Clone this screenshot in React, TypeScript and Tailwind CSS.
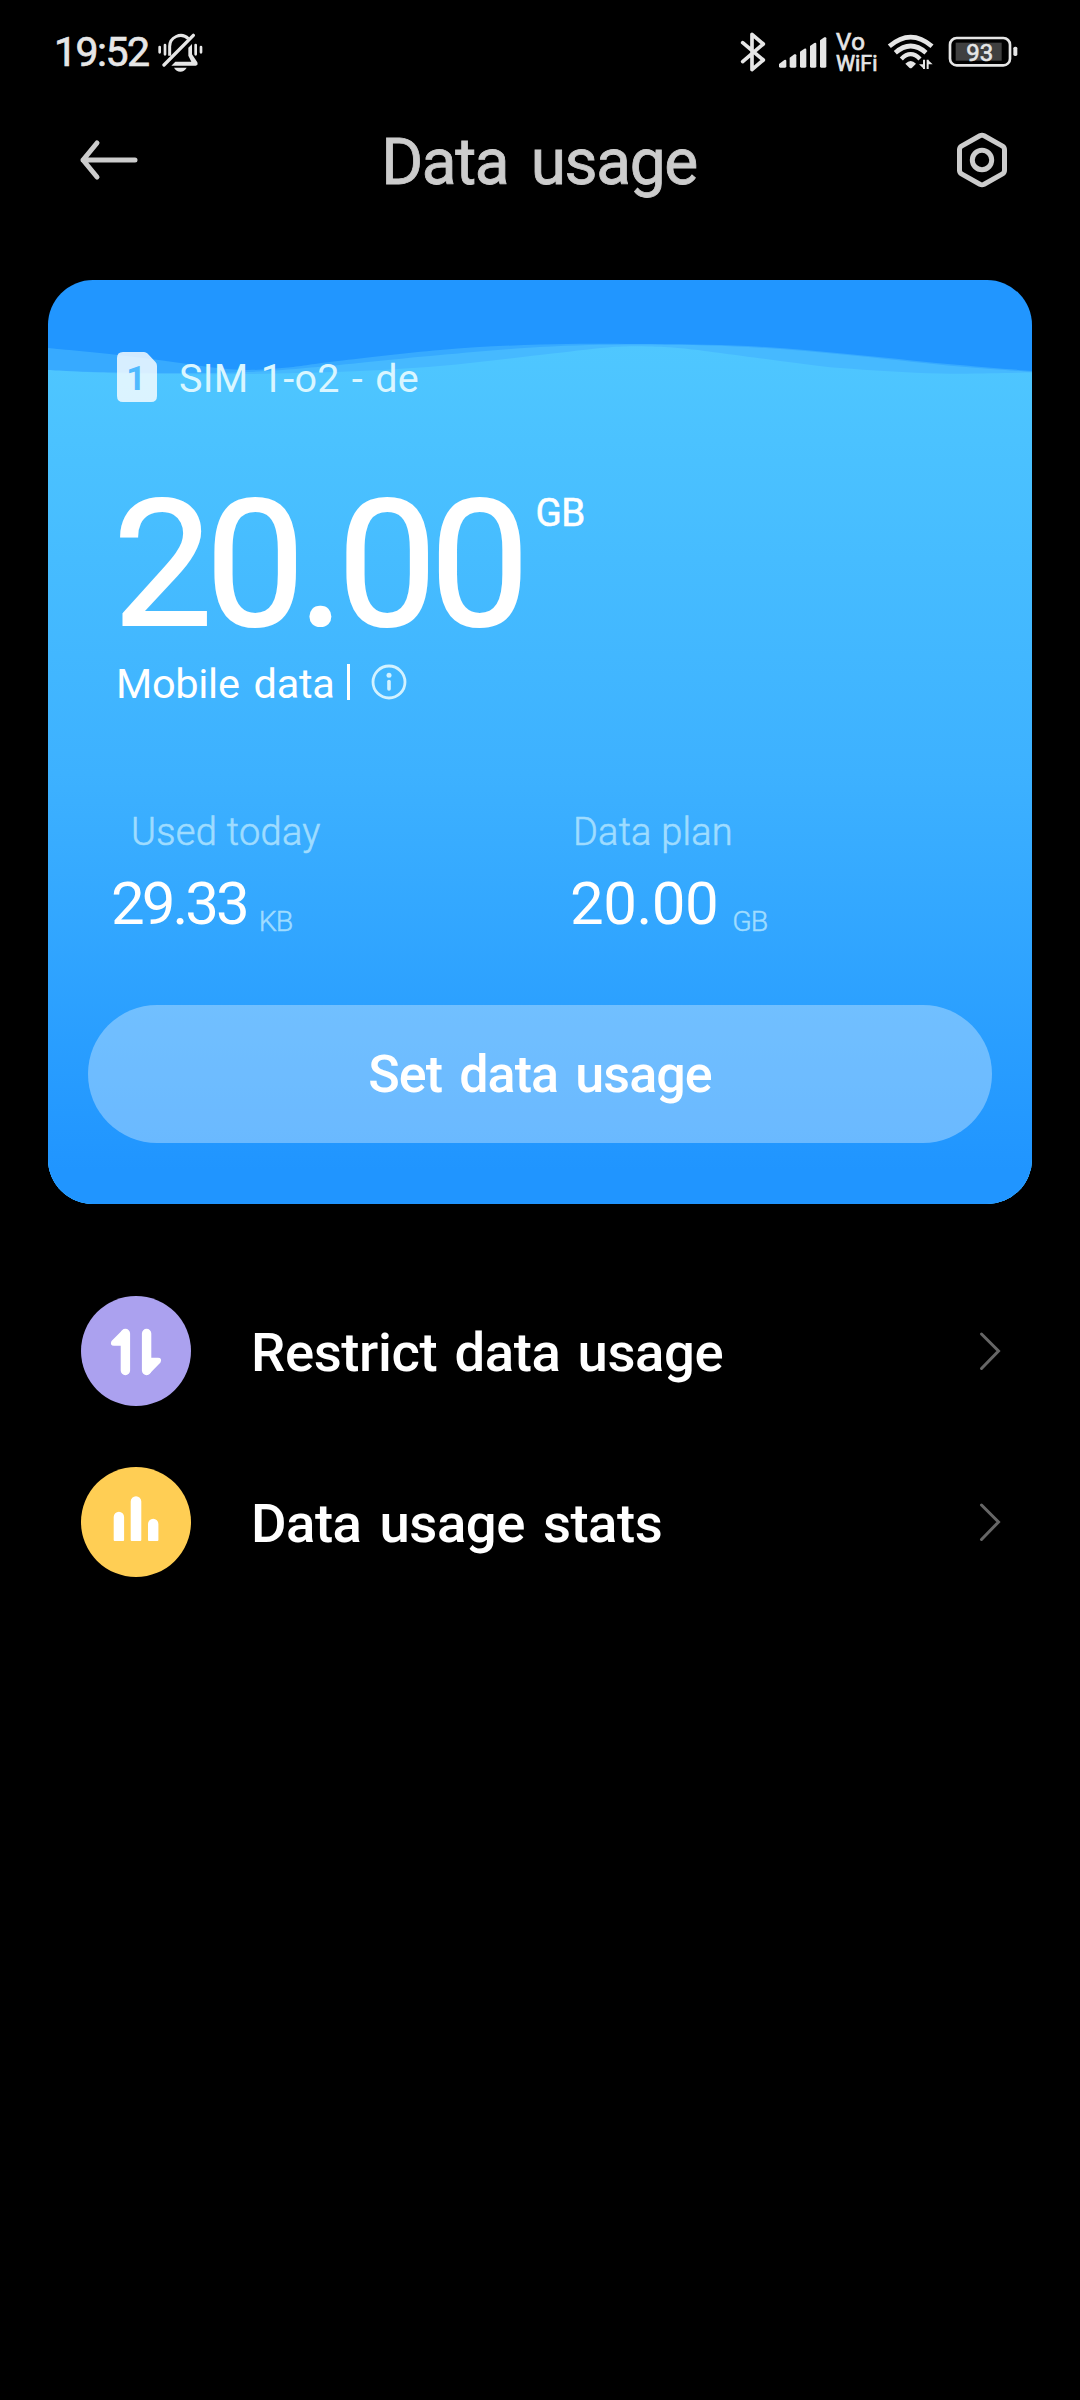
import type { ReactNode } from "react";

type Point = [number, number];

const backWave: Point[] = [
  [0, 68], [70, 75], [125, 82], [165, 87.5], [200, 90], [240, 87.5], [290, 81],
  [392, 70], [492, 64.5], [590, 64], [700, 66], [800, 74], [900, 84], [984, 91],
];

const middleWave: Point[] = [
  [0, 91], [120, 93], [200, 92], [270, 87], [325, 81.5], [392, 75], [492, 67],
  [590, 64.5], [700, 67], [800, 75], [900, 85.5], [984, 92],
];

const frontWave: Point[] = [
  [0, 90], [60, 93], [120, 94], [200, 94], [300, 91.5], [392, 86], [492, 75],
  [560, 67.5], [600, 66.5], [640, 69], [725, 80], [792, 88], [892, 93.5], [984, 92.5],
];

const stats = [
  {
    label: "Used today",
    value: "29.33",
    unit: "KB",
    column: "w-[460px]",
    labelClass: "pl-[18px] tracking-[0.3px]",
    valueClass: "-ml-[2px] tracking-[-3px]",
    unitClass: "ml-[12px] tracking-[-1px]",
  },
  {
    label: "Data plan",
    value: "20.00",
    unit: "GB",
    column: "",
    labelClass: "tracking-[0.2px]",
    valueClass: "-ml-[3px] tracking-[-0.5px]",
    unitClass: "ml-[14px] tracking-[-1px]",
  },
];

const links = [
  {
    title: "Restrict data usage",
    color: "bg-[#aba1ef]",
    textClass: "tracking-[-0.4px] [word-spacing:4px]",
    icon: (
      <>
        <path d="M44.4 37.5V74.5M65.6 37.5V74.5" stroke="white" strokeWidth="9.4" strokeLinecap="round" />
        <path d="M41 34.5L30.5 45Q28.5 49.5 33 49.8H44V36zM69 77.3L79.5 66.5Q81.5 62 77 61.8H66V75z" fill="white" />
      </>
    ),
  },
  {
    title: "Data usage stats",
    color: "bg-[#ffce54]",
    textClass: "tracking-[-0.5px] [word-spacing:5px]",
    icon: (
      <path
        d="M32.7 73V50a5.2 5.2 0 0 1 10.4 0V73q0 1-1 1H33.7q-1 0-1-1zM49.7 73V34.5a5.3 5.3 0 0 1 10.6 0V73q0 1-1 1H50.7q-1 0-1-1zM67 73V57a5.2 5.2 0 0 1 10.4 0V73q0 1-1 1H68q-1 0-1-1z"
        fill="white"
      />
    ),
  },
];

// Smooth curve through the crest points, closed along the bottom of the card.
function wavePath(points: Point[]) {
  let d = `M${points[0][0]} ${points[0][1]}`;
  for (let i = 0; i < points.length - 1; i++) {
    const p0 = points[i - 1] ?? points[i];
    const p1 = points[i];
    const p2 = points[i + 1];
    const p3 = points[i + 2] ?? p2;
    d += `C${p1[0] + (p2[0] - p0[0]) / 6} ${p1[1] + (p2[1] - p0[1]) / 6} `;
    d += `${p2[0] - (p3[0] - p1[0]) / 6} ${p2[1] - (p3[1] - p1[1]) / 6} ${p2[0]} ${p2[1]}`;
  }
  return `${d}V924H0z`;
}

function Waves() {
  return (
    <svg className="absolute inset-0" width="984" height="924" viewBox="0 0 984 924" fill="none">
      <defs>
        <linearGradient id="water" x1="0" y1="64" x2="0" y2="924" gradientUnits="userSpaceOnUse">
          <stop offset="0" stopColor="#4fc7ff" />
          <stop offset="0.5" stopColor="#3db1ff" />
          <stop offset="0.96" stopColor="#2095ff" />
        </linearGradient>
      </defs>
      <path d={wavePath(backWave)} fill="#37aaff" />
      <path d={wavePath(middleWave)} fill="#46b9ff" />
      <path d={wavePath(frontWave)} fill="url(#water)" />
    </svg>
  );
}

function BellOffIcon() {
  return (
    <svg width="45" height="39" viewBox="383 70 135 117" fill="none">
      <path d="M418 138V112A33 33 0 0 1 474 87" stroke="#e6e6e6" strokeWidth="9" />
      <path d="M401 166L489 77" stroke="#e6e6e6" strokeWidth="10" strokeLinecap="round" />
      <path d="M485 103V134L501 158Q504 168 496 168H423L435 156H483L474 138V114z" fill="#e6e6e6" />
      <path d="M431 174H469Q462 186 450 186T431 174z" fill="#e6e6e6" />
      <path d="M388 112V128M404 106V134M496 106V134M512 112V128" stroke="#e6e6e6" strokeWidth="8" strokeLinecap="round" />
    </svg>
  );
}

function BluetoothIcon() {
  return (
    <svg width="26" height="40" viewBox="60 65 78 120" fill="none">
      <path
        d="M68 97L130 149L96 178V72L130 101L68 154"
        stroke="#e6e6e6"
        strokeWidth="11"
        strokeLinecap="round"
        strokeLinejoin="round"
      />
    </svg>
  );
}

function SignalIcon() {
  return (
    <svg width="48" height="31" viewBox="178 82 144 93" fill="#e6e6e6">
      <path d="M178 163L194 151Q200 149 200 154V170Q200 174 196 174H182Q178 174 178 170z" />
      <path d="M210 144L224 134Q230 132 230 137V170Q230 174 226 174H214Q210 174 210 170z" />
      <path d="M241 126L254 117Q260 115 260 120V170Q260 174 256 174H245Q241 174 241 170z" />
      <path d="M271 109L284 100Q290 98 290 103V170Q290 174 286 174H275Q271 174 271 170z" />
      <path d="M301 92L314 83Q320 81 320 86V170Q320 174 316 174H305Q301 174 301 170z" />
    </svg>
  );
}

function WifiIcon() {
  return (
    <svg width="47" height="36" viewBox="502 75 141 108" fill="none">
      <path d="M509 112Q573 57 637 112" stroke="#e6e6e6" strokeWidth="14" />
      <path d="M527 131Q573 91 619 131" stroke="#e6e6e6" strokeWidth="14" />
      <path d="M545 150Q573 121 601 150" stroke="#e6e6e6" strokeWidth="13" />
      <path d="M557 164Q573 148 589 164L577 176Q573 179 569 176z" fill="#e6e6e6" />
      <path d="M613 152V180M624 152V180" stroke="#e6e6e6" strokeWidth="6" />
      <path d="M613 180L598 166H613zM624 152L639 166H624z" fill="#e6e6e6" />
    </svg>
  );
}

function BatteryIcon() {
  return (
    <svg width="70" height="32" viewBox="685 79 210 96" fill="none">
      <rect x="691" y="85" width="180" height="82" rx="20" stroke="#e6e6e6" strokeWidth="8" />
      <rect x="708" y="99" width="138" height="54" fill="#404040" />
      <rect x="881" y="111" width="12" height="28" rx="5" fill="#e6e6e6" />
      <text x="780" y="153" textAnchor="middle" fontSize="72" fill="#e6e6e6" stroke="#e6e6e6" strokeWidth="1.8">
        93
      </text>
    </svg>
  );
}

function StatusBar() {
  return (
    <div className="flex h-[104px] items-center justify-between pr-[62px] pl-[54px] text-[#e6e6e6]">
      <div className="flex items-center">
        <span className="mt-[2px] w-[104px] text-[41px] tracking-[-1.5px] [-webkit-text-stroke:0.7px]">19:52</span>
        <BellOffIcon />
      </div>
      <div className="flex items-center">
        <BluetoothIcon />
        <span className="ml-[13px]">
          <SignalIcon />
        </span>
        <div className="mt-px ml-[9px] flex w-[43px] flex-col [-webkit-text-stroke:0.7px]">
          <span className="text-[24px] leading-[22px] tracking-[0.5px]">Vo</span>
          <span className="text-[21.5px] leading-[22px]">WiFi</span>
        </div>
        <span className="ml-[8px]">
          <WifiIcon />
        </span>
        <span className="ml-[14px]">
          <BatteryIcon />
        </span>
      </div>
    </div>
  );
}

function Header() {
  return (
    <div className="flex h-[112px] items-center justify-between pr-[71px] pl-[78px]">
      <svg width="60" height="44" viewBox="0 0 60 44" fill="none">
        <path
          d="M19 5L5 22L19 39M5 22H57"
          stroke="#ccc"
          strokeWidth="5"
          strokeLinecap="round"
          strokeLinejoin="round"
        />
      </svg>
      <h1 className="mt-[6px] pr-[15px] text-[64px] leading-[76px] tracking-[-1.4px] text-[#ccc] [-webkit-text-stroke:0.8px] [word-spacing:8px]">
        Data usage
      </h1>
      <svg width="54" height="56" viewBox="0 0 54 56" fill="none" stroke="#ccc" strokeWidth="5">
        <path d="M24.8 3.8Q27 2.8 29.2 3.8L47.5 14.2Q49.5 15.4 49.5 17.8V38.2Q49.5 40.6 47.5 41.8L29.2 52.2Q27 53.2 24.8 52.2L6.5 41.8Q4.5 40.6 4.5 38.2V17.8Q4.5 15.4 6.5 14.2z" />
        <circle cx="27" cy="28" r="9.7" />
      </svg>
    </div>
  );
}

function SimIcon() {
  return (
    <svg width="40" height="50" viewBox="0 0 40 50">
      <path
        d="M6 0H27Q29 0 30.5 1.5L38.5 10Q40 11.5 40 14V44Q40 50 34 50H6Q0 50 0 44V6Q0 0 6 0z"
        fill="white"
        fillOpacity="0.8"
      />
      <text x="19" y="38" textAnchor="middle" fontSize="34" fontWeight="700" fill="#4fbaff">
        1
      </text>
    </svg>
  );
}

function InfoIcon() {
  return (
    <svg width="36" height="36" viewBox="0 0 36 36" fill="none">
      <circle cx="18" cy="18" r="16" stroke="#d2f2ff" strokeWidth="2.8" />
      <circle cx="18" cy="11.2" r="2.5" fill="#d2f2ff" />
      <path d="M18 17.5V25" stroke="#d2f2ff" strokeWidth="3.6" strokeLinecap="round" />
    </svg>
  );
}

function UsageCard() {
  return (
    <div className="relative mx-12 mt-16 h-[924px] overflow-hidden rounded-[45px] bg-[#2196ff]">
      <Waves />
      <div className="relative px-[40px] pt-[72px] text-white">
        <div className="ml-[29px] flex h-[50px] items-center">
          <SimIcon />
          <span className="mt-[3px] ml-[22px] text-[39.5px] leading-[50px] tracking-[0.3px] text-[#daf6ff] [word-spacing:2px]">
            SIM 1-o2 - de
          </span>
        </div>
        <div className="mt-[88px] ml-[25px] flex items-start">
          <span className="text-[177px] leading-[150px] tracking-[-7px] [-webkit-text-stroke:2px]">20.00</span>
          <span className="ml-[13px] text-[38.5px] leading-[46px] tracking-[-0.5px] [-webkit-text-stroke:0.6px]">
            GB
          </span>
        </div>
        <div className="mt-[24px] ml-[28px] flex h-[40px] items-start">
          <span className="text-[41.5px] leading-[40px] tracking-[-0.3px] [word-spacing:4px]">Mobile data</span>
          <span className="ml-[12px] h-[36px] w-[3px] bg-white" />
          <span className="ml-[21px]">
            <InfoIcon />
          </span>
        </div>
        <div className="mt-[105px] ml-[25px] flex">
          {stats.map((stat) => (
            <div key={stat.label} className={stat.column}>
              <div
                className={`text-[38px] leading-[46px] font-light text-[#9fdcff] [-webkit-text-stroke:0.6px] ${stat.labelClass}`}
              >
                {stat.label}
              </div>
              <div className="mt-[19px] flex h-[60px] items-end">
                <span className={`text-[60px] leading-[60px] ${stat.valueClass}`}>{stat.value}</span>
                <span
                  className={`text-[28.5px] leading-[24px] font-light text-[#9fdcff] [-webkit-text-stroke:0.5px] ${stat.unitClass}`}
                >
                  {stat.unit}
                </span>
              </div>
            </div>
          ))}
        </div>
        <button className="mt-[71px] h-[138px] w-full rounded-full bg-white/33 pt-[2px] text-[52px] font-medium tracking-[-0.9px] [word-spacing:5px]">
          Set data usage
        </button>
      </div>
    </div>
  );
}

type LinkRowProps = { title: string; color: string; textClass: string; children: ReactNode };

function LinkRow({ title, color, textClass, children }: LinkRowProps) {
  return (
    <a className="flex items-center">
      <span className={`h-[110px] w-[110px] rounded-full ${color}`}>
        <svg width="110" height="110" viewBox="0 0 110 110" fill="none">
          {children}
        </svg>
      </span>
      <span className={`mt-[2px] ml-[60px] flex-1 text-[54.5px] leading-[64px] font-medium ${textClass}`}>{title}</span>
      <svg width="22" height="40" viewBox="0 0 22 40" fill="none">
        <path d="M2.5 3L19.5 20L2.5 37.5" stroke="#666" strokeWidth="3" strokeLinecap="round" />
      </svg>
    </a>
  );
}

export default function App() {
  return (
    <div className="h-[2400px] w-[1080px] bg-black font-[Roboto,'Liberation_Sans',sans-serif]">
      <StatusBar />
      <Header />
      <UsageCard />
      <div className="mt-[92px] flex flex-col gap-[61px] pr-[79px] pl-[81px] text-white">
        {links.map((link) => (
          <LinkRow key={link.title} title={link.title} color={link.color} textClass={link.textClass}>
            {link.icon}
          </LinkRow>
        ))}
      </div>
    </div>
  );
}
